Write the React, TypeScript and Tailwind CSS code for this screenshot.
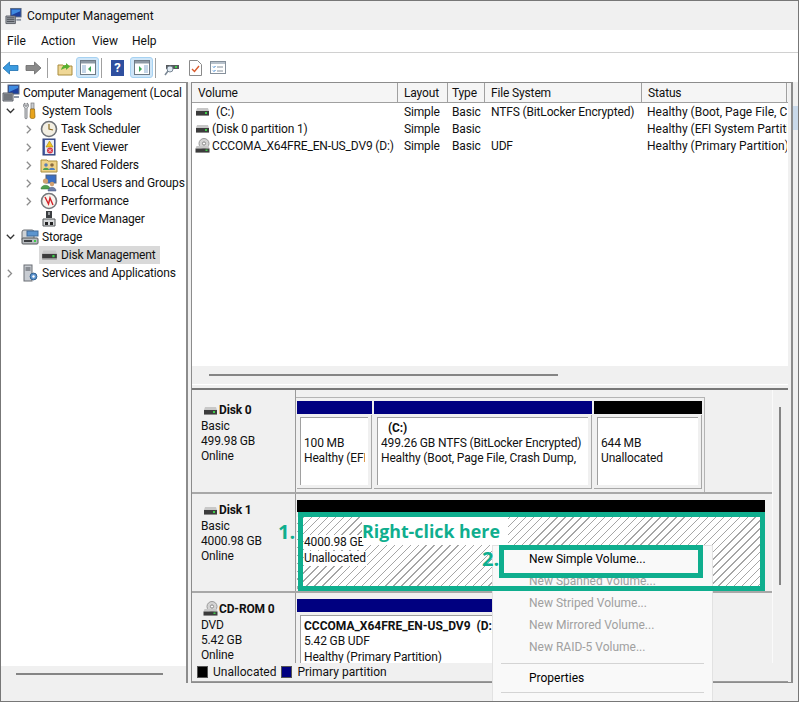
import type { ReactNode } from "react";

const FONT = "font-['Roboto','Liberation_Sans',sans-serif]";

function Drive({ width = 15, height = 10 }: { width?: number; height?: number }) {
  return (
    <svg width={width} height={height} viewBox="0 0 15 10">
      <path d="M2 1h11l1 3H1z" fill="#c8c8c8" />
      <rect x="1" y="4" width="13" height="4" fill="#3c3c3c" />
      <rect x="10" y="5" width="2" height="2" fill="#3ecf4a" />
      <rect x="1" y="8" width="13" height="1" fill="#8a8a8a" />
    </svg>
  );
}

function DiscDrive() {
  return (
    <svg width="15" height="16" viewBox="0 0 15 16">
      <circle cx="9" cy="5.5" r="5" fill="#d4d4d4" stroke="#9a9a9a" />
      <circle cx="9" cy="5.5" r="1.6" fill="#fff" stroke="#888" />
      <path d="M1.5 8h12l1 2.500H.5z" fill="#c8c8c8" />
      <rect x="0.5" y="10.5" width="14" height="3.5" fill="#3c3c3c" />
      <rect x="10.5" y="11.5" width="2" height="1.5" fill="#3ecf4a" />
      <rect x="0.5" y="14" width="14" height="1" fill="#8a8a8a" />
    </svg>
  );
}

function ComputerIcon() {
  return (
    <svg width="18" height="18" viewBox="0 0 18 18">
      <rect x="6" y="1" width="11" height="9" fill="#1c3f9c" stroke="#5a6a80" />
      <path d="M7 2h9v2L7 8z" fill="#3f8be0" />
      <path d="M1 9h10v8H1z" fill="#a9adb3" stroke="#5b5f66" />
      <path d="M2 11h8M2 13h8M2 15h8" stroke="#3c4047" />
      <rect x="12" y="12" width="5" height="2" fill="#8d97a5" />
    </svg>
  );
}

function ToolsIcon() {
  return (
    <svg width="18" height="18" viewBox="0 0 18 18">
      <path d="M4 1c-2 1-2 4 0 5v10c0 1 2 1 2 0V6c2-1 2-4 0-5v3H4z" fill="#d8dadd" stroke="#6a6d72" strokeWidth=".8" />
      <rect x="10" y="1" width="3" height="6" fill="#c9ccd0" stroke="#777" strokeWidth=".7" />
      <path d="M9.500 7h4l.5 8c0 2-5 2-5 0z" fill="#e8a41c" stroke="#8f6308" strokeWidth=".7" />
    </svg>
  );
}

function ClockIcon() {
  return (
    <svg width="18" height="18" viewBox="0 0 18 18">
      <circle cx="9" cy="9" r="7.5" fill="#f3efe2" stroke="#6f7378" strokeWidth="1.6" />
      <path d="M9 4v5l4 1" fill="none" stroke="#8a6a20" strokeWidth="1.2" />
    </svg>
  );
}

function EventIcon() {
  return (
    <svg width="18" height="18" viewBox="0 0 18 18">
      <rect x="3" y="1" width="12" height="16" fill="#4a62a8" stroke="#2e3f78" />
      <rect x="5" y="2" width="9" height="14" fill="#e8ecf5" />
      <path d="M9.500 3l3.500 6H6z" fill="#f3c51e" stroke="#a8860c" strokeWidth=".6" />
      <circle cx="10" cy="12.5" r="3" fill="#d8394a" />
      <path d="M8.700 11.200l2.600 2.600M11.300 11.200l-2.600 2.600" stroke="#fff" strokeWidth=".8" />
    </svg>
  );
}

function SharedIcon() {
  return (
    <svg width="18" height="18" viewBox="0 0 18 18">
      <path d="M1 4h6l1 1h9v11H1z" fill="#f0d488" stroke="#a98c3c" />
      <circle cx="6" cy="9" r="1.8" fill="#5b7fb5" />
      <path d="M3 14c0-3 6-3 6 0z" fill="#4fa04f" />
      <circle cx="12" cy="9" r="1.8" fill="#8a6a40" />
      <path d="M9 14c0-3 6-3 6 0z" fill="#4f7fbf" />
    </svg>
  );
}

function UsersIcon() {
  return (
    <svg width="18" height="18" viewBox="0 0 18 18">
      <rect x="6" y="1" width="10" height="8" fill="#3a6fc4" stroke="#50607a" />
      <circle cx="5.5" cy="7" r="2.6" fill="#d0a070" />
      <path d="M1 15c0-5 9-5 9 0z" fill="#4fa04f" stroke="#2f6f30" strokeWidth=".5" />
      <circle cx="12" cy="10" r="2.2" fill="#d0a070" />
      <path d="M8 17c0-5 8-5 8 0z" fill="#6e7fa8" stroke="#3e4e78" strokeWidth=".5" />
    </svg>
  );
}

function PerfIcon() {
  return (
    <svg width="18" height="18" viewBox="0 0 18 18">
      <circle cx="9" cy="9" r="7.5" fill="#f7f4ee" stroke="#75787c" strokeWidth="1.6" />
      <path d="M5 5l3.500 7L10 6l3 7" fill="none" stroke="#d2232a" strokeWidth="1.4" />
    </svg>
  );
}

function DeviceIcon() {
  return (
    <svg width="18" height="18" viewBox="0 0 18 18">
      <rect x="6" y="1" width="6" height="7" fill="#3c3f42" />
      <rect x="8" y="2" width="2" height="3" fill="#9a9da0" />
      <path d="M3 9h12v7H3z" fill="#d6d8da" stroke="#55585b" />
      <rect x="5" y="12" width="3" height="3" fill="#222" />
      <rect x="10" y="12" width="3" height="3" fill="#222" />
    </svg>
  );
}

function StorageIcon() {
  return (
    <svg width="18" height="18" viewBox="0 0 18 18">
      <rect x="1" y="2" width="12" height="11" rx="2" fill="#cfd3d6" stroke="#6d7175" />
      <rect x="6" y="3" width="11" height="5" fill="#5c95cf" stroke="#3e6a9a" />
      <rect x="1" y="10" width="16" height="6" rx="1" fill="#b8bcc0" stroke="#55585b" />
      <rect x="3" y="12" width="8" height="2" fill="#3c3f42" />
      <rect x="13" y="12" width="2" height="2" fill="#3ecf4a" />
    </svg>
  );
}

function ServicesIcon() {
  return (
    <svg width="18" height="18" viewBox="0 0 18 18">
      <rect x="3" y="1" width="8" height="16" fill="#c8ccd2" stroke="#6a6e75" />
      <path d="M4.500 4h5M4.500 6h5" stroke="#4b4f56" />
      <circle cx="12.5" cy="12.5" r="3.4" fill="#5d94cf" stroke="#32608f" />
      <circle cx="12.5" cy="12.5" r="1.2" fill="#fff" />
    </svg>
  );
}

function Chevron({ open }: { open?: boolean }) {
  return open ? (
    <svg width="9" height="6" viewBox="0 0 9 6">
      <path d="M.8.8l3.700 3.700L8.200.8" fill="none" stroke="#333" strokeWidth="1.3" />
    </svg>
  ) : (
    <svg width="6" height="9" viewBox="0 0 6 9" className="ml-[1px]">
      <path d="M.8.8l3.700 3.700L.8 8.200" fill="none" stroke="#8c8c8c" strokeWidth="1.3" />
    </svg>
  );
}

function TreeRow({
  level,
  chevron,
  icon,
  label,
  selected,
}: {
  level: 1 | 2;
  chevron?: "open" | "closed";
  icon: ReactNode;
  label: string;
  selected?: boolean;
}) {
  return (
    <div className={`flex h-[18px] items-center whitespace-nowrap ${level === 1 ? "pl-[2px]" : "pl-[21px]"}`}>
      <span className="flex w-[17px] shrink-0 items-center pl-[3px]">
        {chevron && <Chevron open={chevron === "open"} />}
      </span>
      <span className={`flex h-[18px] items-center pl-[1px] pr-[4px] ${selected ? "bg-[#d9d9d9]" : ""}`}>
        <span className="mr-[3px] flex w-[18px] justify-center">{icon}</span>
        {label}
      </span>
    </div>
  );
}

function Tree() {
  return (
    <div className="flex h-full w-[187px] shrink-0 flex-col border-t border-r-2 border-[#8c8c8c] bg-white">
      <div className="min-h-0 flex-1 overflow-hidden">
        <div className="flex h-[19px] items-center whitespace-nowrap pl-[1px]">
          <span className="mr-[3px] flex w-[18px] justify-center">
            <ComputerIcon />
          </span>
          Computer Management (Local
        </div>
        <TreeRow level={1} chevron="open" icon={<ToolsIcon />} label="System Tools" />
        <TreeRow level={2} chevron="closed" icon={<ClockIcon />} label="Task Scheduler" />
        <TreeRow level={2} chevron="closed" icon={<EventIcon />} label="Event Viewer" />
        <TreeRow level={2} chevron="closed" icon={<SharedIcon />} label="Shared Folders" />
        <TreeRow level={2} chevron="closed" icon={<UsersIcon />} label="Local Users and Groups" />
        <TreeRow level={2} chevron="closed" icon={<PerfIcon />} label="Performance" />
        <TreeRow level={2} icon={<DeviceIcon />} label="Device Manager" />
        <TreeRow level={1} chevron="open" icon={<StorageIcon />} label="Storage" />
        <TreeRow level={2} icon={<Drive width={17} height={12} />} label="Disk Management" selected />
        <TreeRow level={1} chevron="closed" icon={<ServicesIcon />} label="Services and Applications" />
      </div>
      <div className="h-[17px] shrink-0 bg-[#f0f0f0] pt-[7px]">
        <div className="ml-[15px] h-[2px] w-[147px] bg-[#858585]" />
      </div>
    </div>
  );
}

function ToolbarSep() {
  return <div className="h-[20px] w-px bg-[#a0a0a0]" />;
}

function PaneButton({ right }: { right?: boolean }) {
  return (
    <div className="flex h-[21px] w-[23px] items-center justify-center rounded-[3px] border border-[#a6d2f2] bg-[#cfe6f8]">
      <svg width="16" height="15" viewBox="0 0 16 15">
        <rect x=".5" y=".5" width="15" height="14" fill="#fff" stroke="#6f7a85" />
        <rect x="1" y="1" width="14" height="2.500" fill="#8e99a4" />
        {right ? (
          <>
            <path d="M5 6v6l3-3z" fill="#3aa655" />
            <rect x="10" y="5" width="4" height="8" fill="#c5d6e8" />
          </>
        ) : (
          <>
            <path d="M11 6v6L8 9z" fill="#3aa655" />
            <rect x="2" y="5" width="4" height="8" fill="#c5d6e8" />
          </>
        )}
      </svg>
    </div>
  );
}

function Toolbar() {
  return (
    <div className="flex h-[29px] shrink-0 items-center bg-white pl-[1px]">
      <svg width="17" height="14" viewBox="0 0 17 14">
        <path d="M7.500 1L1 7l6.500 6V9.500H16v-5H7.500z" fill="#3b9be0" stroke="#1c6fb0" strokeWidth=".8" />
      </svg>
      <svg width="17" height="14" viewBox="0 0 17 14" className="ml-[6px]">
        <path d="M9.500 1L16 7l-6.500 6V9.500H1v-5h8.500z" fill="#8a8a8a" stroke="#6a6a6a" strokeWidth=".8" />
      </svg>
      <div className="ml-[5px]">
        <ToolbarSep />
      </div>
      <svg width="16" height="16" viewBox="0 0 16 16" className="ml-[9px]">
        <path d="M1 5h5l1 1h8v9H1z" fill="#efd796" stroke="#a98c3c" />
        <path d="M4 10c1-4 3-5 5-5V3l4 3.500L9 10V8c-2 0-3 1-5 2z" fill="#58b030" />
      </svg>
      <div className="ml-[3px]">
        <PaneButton />
      </div>
      <div className="ml-[2px]">
        <ToolbarSep />
      </div>
      <div className="ml-[9px] flex h-[16px] w-[13px] items-center justify-center bg-[#2f4f9f] text-[13px] font-bold leading-none text-white">
        ?
      </div>
      <div className="ml-[6px]">
        <PaneButton right />
      </div>
      <div className="ml-[2px]">
        <ToolbarSep />
      </div>
      <svg width="16" height="16" viewBox="0 0 16 16" className="ml-[8px]">
        <path d="M2 5h13v4H2z" fill="#55585c" />
        <rect x="11" y="6" width="2" height="2" fill="#3ecf4a" />
        <circle cx="6" cy="9" r="3" fill="#dfe9f2" stroke="#7a8794" />
        <path d="M4 11l-3 4" stroke="#7a8794" strokeWidth="1.6" />
      </svg>
      <svg width="13" height="16" viewBox="0 0 13 16" className="ml-[9px]">
        <path d="M.5.5h8l4 4v11H.5z" fill="#fff" stroke="#8a8a8a" />
        <path d="M3 9l2.500 2.500L10 6" fill="none" stroke="#d9592a" strokeWidth="1.4" />
      </svg>
      <svg width="16" height="13" viewBox="0 0 16 13" className="ml-[8px]">
        <rect x=".5" y=".5" width="15" height="12" fill="#fff" stroke="#85909b" />
        <rect x="1" y="1" width="14" height="2" fill="#b8c2cc" />
        <path d="M3 5.500l1 1 1.500-1.500M3 9.500l1 1 1.500-1.500" fill="none" stroke="#2f7fcf" />
        <path d="M7 6h6M7 10h6" stroke="#85909b" />
      </svg>
    </div>
  );
}

const COLS = "grid grid-cols-[206px_50px_37px_157px_145px]";

function VolumeTable() {
  const rows = [
    { icon: <Drive />, name: "(C:)", pad: "pl-[4px]", fs: "NTFS (BitLocker Encrypted)", status: "Healthy (Boot, Page File, Crash Dump" },
    { icon: <Drive />, name: "(Disk 0 partition 1)", pad: "", fs: "", status: "Healthy (EFI System Partition)" },
    { icon: <DiscDrive />, name: "CCCOMA_X64FRE_EN-US_DV9 (D:)", pad: "", fs: "UDF", status: "Healthy (Primary Partition)" },
  ];
  const headers = ["Volume", "Layout", "Type", "File System", "Status"];
  return (
    <div className="flex h-[307px] shrink-0 flex-col border-b-2 border-[#777]">
      <div className={`${COLS} h-[20px] shrink-0 border-b border-[#a0a0a0] bg-[#f5f5f5]`}>
        {headers.map((h, i) => (
          <div
            key={h}
            className={`flex items-center overflow-hidden whitespace-nowrap border-r border-[#a0a0a0] ${i === 2 ? "pl-[4px]" : "pl-[6px]"}`}
          >
            {h}
          </div>
        ))}
      </div>
      <div className="min-h-0 flex-1 overflow-hidden bg-white">
        {rows.map((r) => (
          <div key={r.name} className={`${COLS} h-[17px]`}>
            <div className="flex items-center overflow-hidden whitespace-nowrap pl-[3px]">
              <span className="flex w-[17px] shrink-0 items-center justify-start">{r.icon}</span>
              <span className={r.pad}>{r.name}</span>
            </div>
            <div className="flex items-center pl-[6px]">Simple</div>
            <div className="flex items-center pl-[4px]">Basic</div>
            <div className="flex items-center pl-[6px]">{r.fs}</div>
            <div className="flex items-center overflow-hidden whitespace-nowrap pl-[5px] tracking-normal">{r.status}</div>
          </div>
        ))}
      </div>
      <div className="h-[18px] shrink-0 bg-[#f0f0f0] pt-[8px]">
        <div className="ml-[17px] h-[2px] w-[349px] bg-[#858585]" />
      </div>
      <div className="h-[4px] shrink-0 border-t border-[#fff] bg-[#f0f0f0]" />
    </div>
  );
}

function DiskLabel({ icon, name, lines, pad }: { icon: ReactNode; name: string; lines: string[]; pad: string }) {
  return (
    <div className={`w-[104px] shrink-0 border-r border-[#9a9a9a] pl-[9px] leading-[15px] ${pad}`}>
      <div className="flex items-center gap-[1px] pl-[2px] font-bold">
        <span className="flex w-[15px] shrink-0 justify-center">{icon}</span>
        <span>{name}</span>
      </div>
      <div className="mt-px">
        {lines.map((l) => (
          <div key={l}>{l}</div>
        ))}
      </div>
    </div>
  );
}

function Partition({
  bar,
  className,
  lines,
  title,
}: {
  bar: string;
  className: string;
  lines: string[];
  title?: string;
}) {
  return (
    <div className={`flex shrink-0 flex-col ${className}`}>
      <div className={`h-[13px] shrink-0 ${bar}`} />
      <div className="mt-px h-[74px] border-b border-r border-[#a8a8a8] pb-[3px] pl-[3px] pr-[3px] pt-[2px]">
        <div className="h-full border-l border-t border-[#a0a0a0] bg-white px-[3px] pt-[3px]">
          <div className="overflow-hidden whitespace-nowrap leading-[15px]">
            <div className="h-[15px] pl-[7px] font-bold">{title}</div>
            {lines.map((l) => (
              <div key={l}>{l}</div>
            ))}
          </div>
        </div>
      </div>
    </div>
  );
}

function Disks() {
  return (
    <div className="flex min-h-0 flex-1 overflow-hidden">
      <div className="min-w-0 flex-1 overflow-hidden">
        <div className="flex h-[104px] border-b-2 border-[#a8a8a8]">
          <DiskLabel icon={<Drive />} name="Disk 0" lines={["Basic", "499.98 GB", "Online"]} pad="pt-[13px]" />
          <div className="pt-[7px]">
            <div className="flex h-[95px] w-[409px] gap-[2px] border-r border-t border-[#b4b4b4] pl-px pt-[3px]">
              <Partition bar="bg-[#000080]" className="w-[75px]" lines={["100 MB", "Healthy (EFI System Partition)"]} />
              <Partition
                bar="bg-[#000080]"
                className="w-[218px]"
                title="(C:)"
                lines={["499.26 GB NTFS (BitLocker Encrypted)", "Healthy (Boot, Page File, Crash Dump,"]}
              />
              <Partition bar="bg-black" className="w-[108px]" lines={["644 MB", "Unallocated"]} />
            </div>
          </div>
        </div>
        <div className="flex h-[99px] border-b-2 border-[#a8a8a8]">
          <DiskLabel icon={<Drive />} name="Disk 1" lines={["Basic", "4000.98 GB", "Online"]} pad="pt-[9px]" />
          <div className="w-[469px] pl-px pt-[6px]">
            <div className="h-[12px] bg-black" />
            <div className="mt-[5px] h-[72px] border-b-2 border-[#a8a8a8] bg-[repeating-linear-gradient(135deg,#ffffff_0,#ffffff_4.6px,#a6a6a6_4.6px,#a6a6a6_5.6px)] pl-[7px] pt-[18px] leading-[15px]">
              <div className="w-fit bg-white pr-px">4000.98 GB</div>
              <div className="mt-px w-fit bg-white pr-px">Unallocated</div>
            </div>
          </div>
        </div>
        <div className="flex h-[80px]">
          <DiskLabel icon={<DiscDrive />} name="CD-ROM 0" lines={["DVD", "5.42 GB", "Online"]} pad="pt-[8px]" />
          <div className="w-[403px] pl-px pt-[6px]">
            <div className="h-[13px] bg-[#000080]" />
            <div className="mt-px h-[60px] pl-[3px] pt-[2px]">
              <div className="h-full overflow-hidden whitespace-nowrap border-l border-t border-[#a0a0a0] bg-white pl-[3px] pt-[3px] leading-[15px]">
                <div className="font-bold tracking-normal">CCCOMA_X64FRE_EN-US_DV9&nbsp; (D:)</div>
                <div>5.42 GB UDF</div>
                <div className="mt-px">Healthy (Primary Partition)</div>
              </div>
            </div>
          </div>
        </div>
      </div>
      <div className="w-[16px] shrink-0 border-l border-[#fafafa] pt-[17px]">
        <div className="ml-[6px] h-[178px] w-[2px] bg-[#858585]" />
      </div>
    </div>
  );
}

function Legend() {
  return (
    <div className="flex h-[19px] shrink-0 items-center border-b border-[#9a9a9a] pl-[5px] tracking-normal">
      <span className="h-[12px] w-[11px] border border-[#555] bg-black" />
      <span className="ml-[5px]">Unallocated</span>
      <span className="ml-[5px] h-[12px] w-[11px] border border-[#555] bg-[#000080]" />
      <span className="ml-[5px]">Primary partition</span>
    </div>
  );
}

function ContextMenu() {
  const greyed = ["New Spanned Volume...", "New Striped Volume...", "New Mirrored Volume...", "New RAID-5 Volume..."];
  return (
    <div className="absolute left-[491px] top-[544px] h-[170px] w-[221px] border border-[#e2e2e2] bg-[#f9f9f9] px-[8px] pt-[2px]">
      <div className="flex h-[22px] items-center pl-[28px] text-black">New Simple Volume...</div>
      {greyed.map((g) => (
        <div key={g} className="flex h-[22px] items-center pl-[28px] text-[#a0a0a0]">
          {g}
        </div>
      ))}
      <div className="mt-[5px] h-px bg-[#d4d4d4]" />
      <div className="flex h-[28px] items-center pl-[28px] text-black">Properties</div>
      <div className="h-px bg-[#d4d4d4]" />
    </div>
  );
}

export default function App() {
  return (
    <div className={`relative h-[702px] w-[799px] overflow-hidden border border-[#777] bg-[#f0f0f0] text-[12px] text-[#111] ${FONT}`}>
      <div className="flex h-[29px] items-center pl-[4px] text-[12px]">
        <span className="mr-[5px] flex w-[17px] justify-center">
          <ComputerIcon />
        </span>
        Computer Management
      </div>
      <div className="flex h-[23px] items-center border-b border-[#d0d0d0] bg-white pl-[6px]">
        <span className="w-[34px]">File</span>
        <span className="w-[51px]">Action</span>
        <span className="w-[40px]">View</span>
        <span>Help</span>
      </div>
      <Toolbar />
      <div className="flex h-[601px] tracking-[-0.15px]">
        <Tree />
        <div className="w-[3px] shrink-0" />
        <div className="flex h-full w-[602px] shrink-0 flex-col border-y border-l border-r-2 border-[#8c8c8c] pr-[3px]">
          <VolumeTable />
          <Disks />
          <Legend />
        </div>
        <div className="flex-1 pt-[24px]">
          <div className="h-[24px] bg-[#c9d9ea]" />
        </div>
      </div>
      <ContextMenu />
      <div className="absolute left-[297px] top-[511px] h-[79px] w-[467px] border-[5px] border-[#0fae8e]" />
      <div className="absolute left-[498px] top-[544px] h-[33px] w-[204px] border-[5px] border-[#0fae8e]" />
      <span className="absolute left-[277px] top-[517px] text-[20px] font-bold leading-[28px] text-[#0fae8e] font-['Open_Sans',sans-serif]">
        1.
      </span>
      <span className="absolute left-[361px] top-[516px] bg-white pr-[8px] text-[17.8px] font-bold leading-[28px] text-[#0fae8e] font-['Open_Sans',sans-serif]">
        Right-click here
      </span>
      <span className="absolute left-[481px] top-[544px] text-[20px] font-bold leading-[28px] text-[#0fae8e] font-['Open_Sans',sans-serif]">
        2.
      </span>
    </div>
  );
}
